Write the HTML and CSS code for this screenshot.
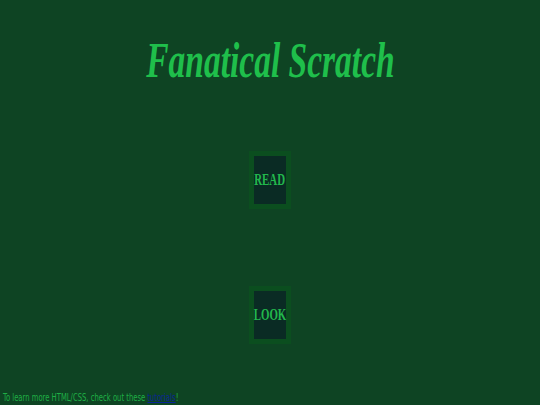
FILE: index.html
```html
<!DOCTYPE html>
<html lang="en">
<head>
<meta charset="utf-8">
<title>Fanatical Scratch</title>
<link rel="stylesheet" href="styles.css">
</head>
<body>
  <main class="page">
    <h1 class="title"><span class="squeeze">Fanatical Scratch</span></h1>
    <nav class="menu">
      <a class="tile" href="#read"><span class="tile-label">READ</span></a>
      <a class="tile" href="#look"><span class="tile-label">LOOK</span></a>
    </nav>
  </main>
  <footer class="credits"><span class="credits-text">To learn more HTML/CSS, check out these <a class="credits-link" href="#tutorials">tutorials</a>!</span></footer>
</body>
</html>
```
FILE: styles.css
```css
html, body {
  margin: 0;
  padding: 0;
  height: 100%;
}

body {
  background: #0e4423;
  display: flex;
  flex-direction: column;
  font-family: "Liberation Serif", "Times New Roman", serif;
}

.page {
  flex: 1;
  display: flex;
  flex-direction: column;
  align-items: center;
  padding-top: 36px;
}

.title {
  margin: 0;
  font-size: 50px;
  line-height: 48px;
  font-weight: bold;
  font-style: italic;
  color: #1fbf4b;
}

.squeeze {
  display: inline-block;
  transform: scaleX(0.67);
}

.menu {
  display: flex;
  flex-direction: column;
  align-items: center;
  gap: 77px;
  margin-top: 67px;
}

.tile {
  display: flex;
  align-items: center;
  justify-content: center;
  width: 32px;
  height: 48px;
  border: 5px solid #0b4e1f;
  background: #0a2b24;
  text-decoration: none;
}

.tile-label {
  display: inline-block;
  font-size: 16px;
  font-weight: bold;
  color: #22b84c;
  transform: scaleX(0.68);
}

.credits {
  padding: 0 0 1px 3px;
  font-family: "DejaVu Sans Condensed", "DejaVu Sans", sans-serif;
  font-size: 10px;
  line-height: 13px;
  color: #1fae45;
  white-space: nowrap;
}

.credits-text {
  display: inline-block;
  transform: scaleX(0.76);
  transform-origin: left center;
}

.credits-link {
  color: #0a2399;
}
```
